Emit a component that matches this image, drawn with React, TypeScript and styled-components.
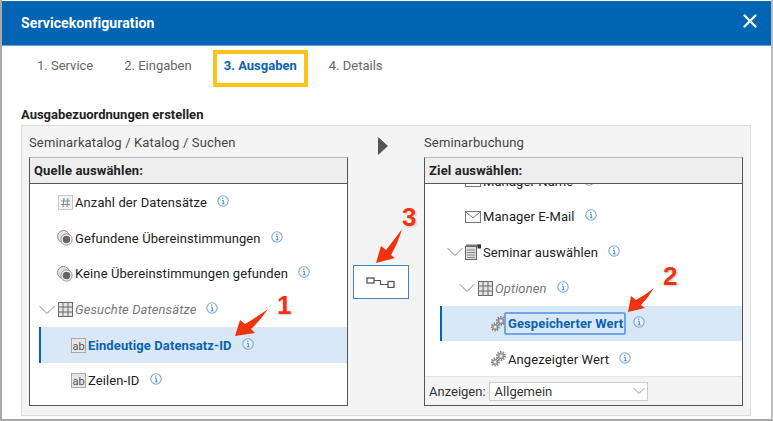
import React from 'react';
import styled, { createGlobalStyle } from 'styled-components';
import { ChevronDown, X } from 'lucide-react';

const GlobalStyle = createGlobalStyle`
  html, body {
    margin: 0;
    padding: 0;
    background: #fff;
  }
  body {
    font-family: Roboto, "Liberation Sans", sans-serif;
    font-size: 13px;
    color: #222;
  }
`;

const HashIcon = () => (
  <svg width="15" height="15" viewBox="0 0 15 15">
    <rect x="0.5" y="0.5" width="14" height="14" fill="#f4f4f4" stroke="#c8c8c8" />
    <path d="M6 3L5 12M10 3L9 12M3 6H12M3 9.5H12" stroke="#888" strokeWidth="1" fill="none" />
  </svg>
);

const RadioIcon = () => (
  <svg width="16" height="16" viewBox="0 0 16 16">
    <circle cx="6.5" cy="6.5" r="6" fill="#e4e4e4" stroke="#8c8c8c" />
    <circle cx="9.5" cy="9.5" r="5.6" fill="#fff" stroke="#8c8c8c" />
    <circle cx="9.5" cy="9.5" r="3.8" fill="#666" />
  </svg>
);

const GridIcon = () => (
  <svg width="15" height="15" viewBox="0 0 15 15">
    <rect x="0.5" y="0.5" width="14" height="14" fill="#e4e4e4" stroke="#6a6a6a" />
    <path d="M5 1V14M10 1V14M1 5H14M1 10H14" stroke="#6a6a6a" strokeWidth="1" fill="none" />
  </svg>
);

const TextIcon = () => (
  <svg width="15" height="15" viewBox="0 0 15 15">
    <rect x="0.5" y="0.5" width="14" height="14" fill="#e6e6e6" stroke="#aaa" />
    <text x="7.5" y="11.5" textAnchor="middle" fontFamily="Roboto, sans-serif" fontSize="11" fill="#555">ab</text>
  </svg>
);

const MailIcon = () => (
  <svg width="16" height="12" viewBox="0 0 16 12">
    <rect x="0.5" y="0.5" width="15" height="11" fill="#fff" stroke="#777" />
    <path d="M1 1L8 7L15 1" stroke="#777" fill="none" />
  </svg>
);

const FormIcon = () => (
  <svg width="16" height="16" viewBox="0 0 16 16">
    <rect x="0.5" y="2.5" width="11" height="13" fill="#ddd" stroke="#666" />
    <path d="M2 6H10M2 8.5H10M2 11H10M2 13.5H10" stroke="#888" fill="none" />
    <rect x="1" y="0.5" width="15" height="2" fill="#777" />
    <rect x="12.5" y="0.5" width="3.5" height="4" fill="#333" />
  </svg>
);

const GearShape = ({ cx, cy, r }: { cx: number; cy: number; r: number }) => (
  <g>
    <circle cx={cx} cy={cy} r={r} fill="none" stroke="#8a8a8a" strokeWidth={r * 0.55} strokeDasharray="1.4 1.1" />
    <circle cx={cx} cy={cy} r={r * 0.72} fill="#b5b5b5" stroke="#777" strokeWidth="0.8" />
    <circle cx={cx} cy={cy} r={r * 0.28} fill="#fff" />
  </g>
);

const GearsIcon = () => (
  <svg width="15" height="16" viewBox="0 0 15 16">
    <GearShape cx={10} cy={5} r={4} />
    <GearShape cx={4.2} cy={11} r={3.6} />
  </svg>
);

const InfoIcon = () => (
  <svg width="12" height="12" viewBox="0 0 12 12">
    <circle cx="6" cy="6" r="5.2" fill="#fff" fillOpacity="0.4" stroke="#7aa9de" strokeWidth="1.1" />
    <path d="M5 3.2H6.4M5 5.3H6.3V8.8M4.8 8.8H7.6" stroke="#4a86c8" strokeWidth="1" fill="none" />
  </svg>
);

const LinkIcon = () => (
  <svg width="30" height="11" viewBox="0 0 30 11">
    <rect x="1" y="1" width="7" height="5" fill="#fff" stroke="#555" strokeWidth="1.3" />
    <rect x="22" y="4.5" width="6" height="6" fill="#fff" stroke="#555" strokeWidth="1.3" />
    <path d="M8 3.5H14.5V7.5H22" stroke="#555" strokeWidth="1.2" fill="none" />
  </svg>
);

type RowData = {
  label: string;
  icon: React.ReactNode;
  indent: number;
  open?: boolean;
  muted?: boolean;
  selected?: boolean;
  focused?: boolean;
};

const sourceRows: RowData[] = [
  { label: 'Anzahl der Datensätze', icon: <HashIcon />, indent: 16 },
  { label: 'Gefundene Übereinstimmungen', icon: <RadioIcon />, indent: 16 },
  { label: 'Keine Übereinstimmungen gefunden', icon: <RadioIcon />, indent: 16 },
  { label: 'Gesuchte Datensätze', icon: <GridIcon />, indent: 16, open: true, muted: true },
  { label: 'Eindeutige Datensatz-ID', icon: <TextIcon />, indent: 29, selected: true },
  { label: 'Zeilen-ID', icon: <TextIcon />, indent: 29 },
];

const targetRows: RowData[] = [
  { label: 'Manager Name', icon: <MailIcon />, indent: 23 },
  { label: 'Manager E-Mail', icon: <MailIcon />, indent: 23 },
  { label: 'Seminar auswählen', icon: <FormIcon />, indent: 23, open: true },
  { label: 'Optionen', icon: <GridIcon />, indent: 35, open: true, muted: true },
  { label: 'Gespeicherter Wert', icon: <GearsIcon />, indent: 48, selected: true, focused: true },
  { label: 'Angezeigter Wert', icon: <GearsIcon />, indent: 48 },
];

const TreeRows = ({ rows }: { rows: RowData[] }) => (
  <>
    {rows.map((row) => (
      <Row key={row.label} $indent={row.indent} $selected={row.selected}>
        {row.open && <Twist size={28} strokeWidth={0.8} />}
        <IconSlot>{row.icon}</IconSlot>
        <RowLabel $muted={row.muted} $selected={row.selected} $focused={row.focused}>
          {row.label}
        </RowLabel>
        <InfoSlot>
          <InfoIcon />
        </InfoSlot>
      </Row>
    ))}
  </>
);

export default function App() {
  return (
    <Page>
      <GlobalStyle />
      <Header>
        <Title>Servicekonfiguration</Title>
        <CloseIcon size={22} strokeWidth={2.5} />
      </Header>
      <Tabs>
        <Tab>1. Service</Tab>
        <Tab>2. Eingaben</Tab>
        <Tab $active>3. Ausgaben</Tab>
        <Tab>4. Details</Tab>
      </Tabs>
      <SectionTitle>Ausgabezuordnungen erstellen</SectionTitle>
      <Panel>
        <Column>
          <ColumnTitle>Seminarkatalog / Katalog / Suchen</ColumnTitle>
          <TreeBox>
            <TreeHead>Quelle auswählen:</TreeHead>
            <TreeBody>
              <TreeRows rows={sourceRows} />
            </TreeBody>
          </TreeBox>
        </Column>
        <Middle>
          <Triangle />
          <MapButton>
            <LinkIcon />
          </MapButton>
        </Middle>
        <Column>
          <ColumnTitle>Seminarbuchung</ColumnTitle>
          <TreeBox>
            <TreeHead>Ziel auswählen:</TreeHead>
            <TreeBody>
              <Scrolled>
                <TreeRows rows={targetRows} />
              </Scrolled>
            </TreeBody>
            <TreeFoot>
              <span>Anzeigen:</span>
              <SelectBox>
                Allgemein
                <SelectArrow size={20} strokeWidth={0.9} />
              </SelectBox>
            </TreeFoot>
          </TreeBox>
        </Column>
      </Panel>
      <ArrowLayer width="773" height="421" viewBox="0 0 773 421">
        <g fill="#f0330f">
          <path d="M235 336L240 320L245 324Q257 317 268 309Q260 321 251 329L255 333Z" />
          <path d="M628 312L631 296L636 300Q645 295 654 288Q648 298 641 305L645 308Z" />
          <path d="M376 263L381 246L386 250Q394 240 402 229Q398 243 391 255L395 258Z" />
        </g>
      </ArrowLayer>
      <Badge $x={277} $y={290}>1</Badge>
      <Badge $x={663} $y={261}>2</Badge>
      <Badge $x={402} $y={202}>3</Badge>
    </Page>
  );
}

const Page = styled.div`
  position: relative;
  width: 773px;
  height: 421px;
  overflow: hidden;
  box-sizing: border-box;
  background: #fff;
  padding: 1px 0 0;
  border-left: 2px solid #a9a9a9;
  border-right: 2px solid #bdbdbd;
  border-bottom: 2px solid #a9a9a9;
`;

const Header = styled.div`
  height: 45px;
  background: #0066b3;
  border-bottom: 1px solid #5aa5da;
  box-sizing: border-box;
  display: flex;
  align-items: center;
  justify-content: space-between;
  padding: 0 10px 0 19px;
  color: #fff;
`;

const Title = styled.div`
  font-size: 14px;
  font-weight: 700;
  letter-spacing: 0.1px;
`;

const CloseIcon = styled(X)`
  color: #fff;
  margin-bottom: 4px;
`;

const Tabs = styled.div`
  display: flex;
  align-items: center;
  gap: 11px;
  height: 37px;
  margin-top: 4px;
  padding-left: 25px;
`;

const Tab = styled.div<{ $active?: boolean }>`
  box-sizing: border-box;
  height: 37px;
  display: flex;
  align-items: center;
  padding: 0 ${({ $active }) => ($active ? '7px' : '10px')} 6px;
  font-size: 13px;
  color: ${({ $active }) => ($active ? '#0a63ad' : '#666')};
  font-weight: ${({ $active }) => ($active ? 700 : 400)};
  border: ${({ $active }) => ($active ? '4px solid #fcc419' : 'none')};
`;

const SectionTitle = styled.div`
  margin: 19px 0 1px 19px;
  height: 18px;
  line-height: 18px;
  font-size: 13px;
  font-weight: 700;
  color: #222;
`;

const Panel = styled.div`
  box-sizing: border-box;
  width: 730px;
  height: 291px;
  margin-left: 19px;
  padding: 7px 7px 9px;
  background: #f4f4f4;
  border: 1px solid #ddd;
  display: grid;
  grid-template-columns: 319px 76px 319px;
`;

const Column = styled.div`
  display: flex;
  flex-direction: column;
  min-height: 0;
`;

const ColumnTitle = styled.div`
  height: 24px;
  line-height: 20px;
  font-size: 13px;
  letter-spacing: 0.15px;
  color: #444;
`;

const TreeBox = styled.div`
  flex: 1;
  min-height: 0;
  display: flex;
  flex-direction: column;
  background: #fff;
  border: 1px solid #555;
  border-top-color: #bbb;
`;

const TreeHead = styled.div`
  height: 26px;
  flex: none;
  box-sizing: border-box;
  padding-left: 4px;
  line-height: 25px;
  font-weight: 700;
  font-size: 13px;
  letter-spacing: 0.15px;
  color: #222;
  background: #eee;
  border-bottom: 1px solid #555;
`;

const TreeBody = styled.div`
  flex: 1;
  min-height: 0;
  overflow: hidden;
  padding: 1px 0 0 9px;
`;

const Scrolled = styled.div`
  margin-top: -21.5px;
  padding-left: 6px;
`;

const Row = styled.div<{ $indent: number; $selected?: boolean }>`
  position: relative;
  height: 35.6px;
  box-sizing: border-box;
  display: flex;
  align-items: center;
  padding-left: ${({ $indent }) => $indent}px;
  background: ${({ $selected }) => ($selected ? '#d9e8f6' : 'transparent')};
  border-left: 2px solid ${({ $selected }) => ($selected ? '#0066b3' : 'transparent')};
`;

const Twist = styled(ChevronDown)`
  position: absolute;
  margin-left: -24px;
  color: #777;
`;

const IconSlot = styled.span`
  width: 16px;
  height: 16px;
  flex: none;
  display: flex;
  align-items: center;
  justify-content: center;
  margin-right: 2px;
`;

const RowLabel = styled.span<{ $muted?: boolean; $selected?: boolean; $focused?: boolean }>`
  font-size: 13px;
  letter-spacing: 0.1px;
  white-space: nowrap;
  color: ${({ $muted, $selected }) => ($selected ? '#0a63ad' : $muted ? '#777' : '#222')};
  font-style: ${({ $muted }) => ($muted ? 'italic' : 'normal')};
  font-weight: ${({ $selected }) => ($selected ? 700 : 400)};
  ${({ $focused }) =>
    $focused &&
    `
    padding: 2px 1px 2px 2px;
    margin: 0 -3px 0 -4px;
    border: 2px solid #6ea4ea;
    border-radius: 2px;
  `}
`;

const InfoSlot = styled.span`
  display: flex;
  margin-left: 10px;
  margin-top: -3px;
`;

const TreeFoot = styled.div`
  height: 29px;
  flex: none;
  box-sizing: border-box;
  display: flex;
  align-items: center;
  gap: 3px;
  padding-left: 4px;
  background: #f4f4f4;
  border-top: 1px solid #e2e2e2;
  color: #333;
`;

const SelectBox = styled.div`
  box-sizing: border-box;
  width: 159px;
  height: 19px;
  display: flex;
  align-items: center;
  justify-content: space-between;
  padding: 0 0 0 5px;
  background: #fff;
  border: 1px solid #ccc;
  overflow: hidden;
`;

const SelectArrow = styled(ChevronDown)`
  color: #777;
  margin-right: -2px;
`;

const Middle = styled.div`
  display: flex;
  flex-direction: column;
  align-items: center;
`;

const Triangle = styled.div`
  width: 0;
  height: 0;
  margin: 4px 0 0 -6px;
  border-left: 10px solid #555;
  border-top: 9px solid transparent;
  border-bottom: 9px solid transparent;
`;

const MapButton = styled.div`
  box-sizing: border-box;
  width: 56px;
  height: 34px;
  margin: 110px 0 0 -11px;
  display: flex;
  align-items: center;
  justify-content: center;
  background: #fff;
  border: 1px solid #3f86b8;
`;

const ArrowLayer = styled.svg`
  position: absolute;
  left: -2px;
  top: 0;
  pointer-events: none;
`;

const Badge = styled.div<{ $x: number; $y: number }>`
  position: absolute;
  left: ${({ $x }) => $x - 2}px;
  top: ${({ $y }) => $y}px;
  font-family: "Liberation Sans", sans-serif;
  font-size: 26px;
  line-height: 30px;
  font-weight: 700;
  color: #ee3311;
  text-shadow: 0 0 2px #fff, 1px 1px 2px #bbb;
`;
